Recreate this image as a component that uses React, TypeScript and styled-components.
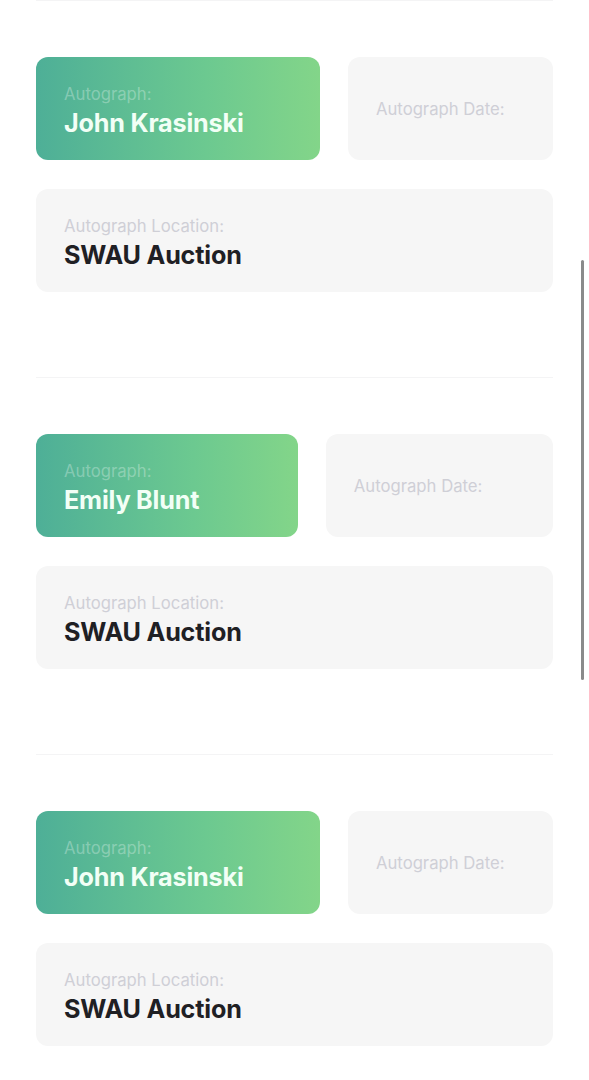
import styled, { createGlobalStyle } from "styled-components";

const GlobalStyle = createGlobalStyle`
    * {
        box-sizing: border-box;
    }
    html, body {
        margin: 0;
        padding: 0;
        background: #ffffff;
        font-family: Inter, "Noto Sans", sans-serif;
        overflow: hidden;
    }
`

const StyledPage = styled.div`
    position: relative;
    width: 589px;
    height: 1080px;
    overflow: hidden;
    padding: 0 36px;
    background: #ffffff;
`

const StyledSection = styled.section`
    border-top: 1px solid #f4f4f5;
    padding: 56px 0 85px 0;
    display: flex;
    flex-direction: column;
    gap: 29px;
`

const StyledRow = styled.div`
    display: flex;
    gap: 28px;
`

const StyledCard = styled.div<{ $green?: boolean; $wide?: boolean; $empty?: boolean }>`
    flex: 1 1 auto;
    height: 103px;
    border-radius: 12px;
    display: flex;
    flex-direction: column;
    justify-content: center;
    gap: 4px;
    padding: ${p => (p.$green ? "5px 56px 0 28px" : p.$empty ? "0 28px" : "5px 28px 0 28px")};
    background: ${p =>
        p.$green ? "linear-gradient(90deg, #4eaf97 0%, #6cc990 60%, #83d589 100%)" : "#f6f6f6"};
    white-space: nowrap;
    width: ${p => (p.$wide ? "100%" : "auto")};
`

const StyledLabel = styled.span<{ $green?: boolean }>`
    font-size: 16.7px;
    line-height: 20px;
    color: ${p => (p.$green ? "rgba(255, 255, 255, 0.3)" : "#cfcfd6")};
`

const StyledValue = styled.span<{ $green?: boolean }>`
    font-size: 25.2px;
    line-height: 30px;
    font-weight: 700;
    letter-spacing: -0.2px;
    color: ${p => (p.$green ? "#f2fff6" : "#1f2024")};
`

const StyledScrollbar = styled.div`
    position: absolute;
    right: 5px;
    top: 260px;
    width: 3px;
    height: 420px;
    border-radius: 2px;
    background: #8a8a8a;
`

const entries = ["John Krasinski", "Emily Blunt", "John Krasinski"]

export default function App() {
    return (
        <>
            <GlobalStyle />
            <StyledPage>
                {entries.map((name, i) => (
                    <StyledSection key={i}>
                        <StyledRow>
                            <StyledCard $green>
                                <StyledLabel $green>Autograph:</StyledLabel>
                                <StyledValue $green>{name}</StyledValue>
                            </StyledCard>
                            <StyledCard $empty>
                                <StyledLabel>Autograph Date:</StyledLabel>
                            </StyledCard>
                        </StyledRow>
                        <StyledCard $wide>
                            <StyledLabel>Autograph Location:</StyledLabel>
                            <StyledValue>SWAU Auction</StyledValue>
                        </StyledCard>
                    </StyledSection>
                ))}
                <StyledScrollbar />
            </StyledPage>
        </>
    )
}
